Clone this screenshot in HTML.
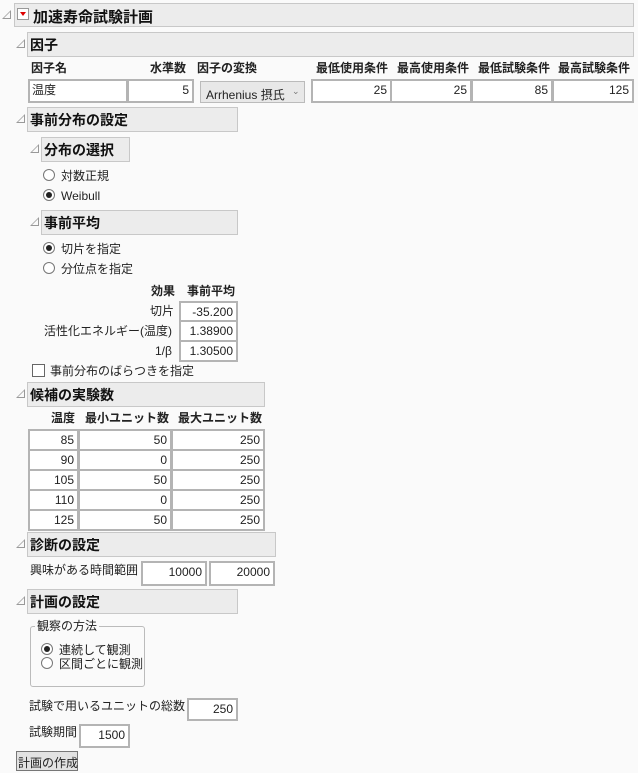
<!DOCTYPE html><html><head><meta charset="utf-8"><style>
body{margin:0;width:638px;height:773px;background:#fafafa;font-family:"Liberation Sans","Noto Sans CJK JP",sans-serif;font-size:12px;color:#222;position:relative;overflow:hidden}
div,span{position:absolute;box-sizing:border-box}
.h{background:#ececec;border:1px solid #c8c8c8;font-weight:bold;font-size:14px;padding:2px 0 0 2px;color:#111}
.t{width:0;height:0;border-left:9px solid transparent;border-bottom:9px solid #999}
.t::after{content:"";position:absolute;left:-7px;top:2px;border-left:6px solid transparent;border-bottom:6px solid #fafafa}
.b{background:#fff;border:2px solid #b4b4b4;text-align:right;padding:1px 3px 0 0;line-height:16px}
.l{white-space:nowrap;line-height:14px}
.bl{font-weight:bold}
.r{width:12px;height:12px;border:1px solid #777;border-radius:50%;background:#fff}
.r.on::after{content:"";position:absolute;left:2px;top:2px;width:6px;height:6px;border-radius:50%;background:#222}
</style></head><body>
<div class="t" style="left:2px;top:10px"></div>
<div class="h" style="left:14px;top:3px;width:620px;height:24px;font-size:15px;padding-left:18px">加速寿命試験計画</div>
<div style="left:17px;top:8px;width:12px;height:12px;border:1px solid #999;background:#fff"><span style="left:2px;top:3px;border-left:3px solid transparent;border-right:3px solid transparent;border-top:4px solid #d00"></span></div>
<div class="t" style="left:16px;top:39px"></div>
<div class="h" style="left:27px;top:32px;width:607px;height:25px">因子</div>
<div class="l bl" style="left:31px;top:61px">因子名</div>
<div class="l bl" style="left:150px;top:61px">水準数</div>
<div class="l bl" style="left:197px;top:61px">因子の変換</div>
<div class="l bl" style="left:316px;top:61px">最低使用条件</div>
<div class="l bl" style="left:397px;top:61px">最高使用条件</div>
<div class="l bl" style="left:478px;top:61px">最低試験条件</div>
<div class="l bl" style="left:558px;top:61px">最高試験条件</div>
<div class="b" style="left:28px;top:79px;width:100px;height:24px;text-align:left;padding-left:2px">温度</div>
<div class="b" style="left:127px;top:79px;width:67px;height:24px">5</div>
<div style="left:200px;top:81px;width:105px;height:22px;border:1px solid #bbb;background:#e8e8e8;padding:4px 0 0 5px;white-space:nowrap">Arrhenius 摂氏 <span style="left:91px;top:4px;font-size:9px;color:#777">⌄</span></div>
<div class="b" style="left:311px;top:79px;width:81px;height:24px">25</div>
<div class="b" style="left:390px;top:79px;width:82px;height:24px">25</div>
<div class="b" style="left:471px;top:79px;width:82px;height:24px">85</div>
<div class="b" style="left:552px;top:79px;width:82px;height:24px">125</div>
<div class="t" style="left:16px;top:114px"></div>
<div class="h" style="left:27px;top:107px;width:211px;height:25px">事前分布の設定</div>
<div class="t" style="left:30px;top:144px"></div>
<div class="h" style="left:41px;top:137px;width:89px;height:25px">分布の選択</div>
<div class="r" style="left:43px;top:169px"></div><div class="l" style="left:61px;top:169px">対数正規</div>
<div class="r on" style="left:43px;top:189px"></div><div class="l" style="left:61px;top:189px">Weibull</div>
<div class="t" style="left:30px;top:217px"></div>
<div class="h" style="left:41px;top:210px;width:197px;height:25px">事前平均</div>
<div class="r on" style="left:43px;top:242px"></div><div class="l" style="left:61px;top:242px">切片を指定</div>
<div class="r" style="left:43px;top:262px"></div><div class="l" style="left:61px;top:262px">分位点を指定</div>
<div class="l bl" style="left:151px;top:284px">効果</div>
<div class="l bl" style="left:187px;top:284px">事前平均</div>
<div class="l" style="left:150px;top:304px">切片</div>
<div class="l" style="left:44px;top:324px">活性化エネルギー(温度)</div>
<div class="l" style="left:155px;top:344px">1/β</div>
<div class="b" style="left:179px;top:301px;width:59px;height:21px">-35.200</div>
<div class="b" style="left:179px;top:320px;width:59px;height:22px">1.38900</div>
<div class="b" style="left:179px;top:340px;width:59px;height:22px">1.30500</div>
<div style="left:32px;top:364px;width:13px;height:13px;border:1px solid #666;background:#fff"></div>
<div class="l" style="left:50px;top:364px">事前分布のばらつきを指定</div>
<div class="t" style="left:16px;top:389px"></div>
<div class="h" style="left:27px;top:382px;width:238px;height:25px">候補の実験数</div>
<div class="l bl" style="left:51px;top:411px">温度</div>
<div class="l bl" style="left:85px;top:411px">最小ユニット数</div>
<div class="l bl" style="left:178px;top:411px">最大ユニット数</div>
<div class="b" style="left:28px;top:429px;width:51px;height:22px">85</div><div class="b" style="left:78px;top:429px;width:94px;height:22px">50</div><div class="b" style="left:171px;top:429px;width:94px;height:22px">250</div>
<div class="b" style="left:28px;top:449px;width:51px;height:22px">90</div><div class="b" style="left:78px;top:449px;width:94px;height:22px">0</div><div class="b" style="left:171px;top:449px;width:94px;height:22px">250</div>
<div class="b" style="left:28px;top:469px;width:51px;height:22px">105</div><div class="b" style="left:78px;top:469px;width:94px;height:22px">50</div><div class="b" style="left:171px;top:469px;width:94px;height:22px">250</div>
<div class="b" style="left:28px;top:489px;width:51px;height:22px">110</div><div class="b" style="left:78px;top:489px;width:94px;height:22px">0</div><div class="b" style="left:171px;top:489px;width:94px;height:22px">250</div>
<div class="b" style="left:28px;top:509px;width:51px;height:22px">125</div><div class="b" style="left:78px;top:509px;width:94px;height:22px">50</div><div class="b" style="left:171px;top:509px;width:94px;height:22px">250</div>
<div class="t" style="left:16px;top:539px"></div>
<div class="h" style="left:27px;top:532px;width:249px;height:25px">診断の設定</div>
<div class="l" style="left:30px;top:563px">興味がある時間範囲</div>
<div class="b" style="left:141px;top:561px;width:66px;height:25px">10000</div>
<div class="b" style="left:209px;top:561px;width:66px;height:25px">20000</div>
<div class="t" style="left:16px;top:596px"></div>
<div class="h" style="left:27px;top:589px;width:211px;height:25px">計画の設定</div>
<div style="left:30px;top:626px;width:115px;height:61px;border:1px solid #bbb;border-radius:3px"></div>
<div class="l" style="left:35px;top:619px;background:#fafafa;padding:0 2px">観察の方法</div>
<div class="r on" style="left:41px;top:643px"></div><div class="l" style="left:59px;top:643px">連続して観測</div>
<div class="r" style="left:41px;top:657px"></div><div class="l" style="left:59px;top:657px">区間ごとに観測</div>
<div class="l" style="left:29px;top:699px">試験で用いるユニットの総数</div>
<div class="b" style="left:187px;top:698px;width:51px;height:23px">250</div>
<div class="l" style="left:29px;top:725px">試験期間</div>
<div class="b" style="left:79px;top:724px;width:51px;height:24px">1500</div>
<div style="left:16px;top:751px;width:62px;height:20px;border:1px solid #777;background:#e2e2e2;padding:2px 0 0 1px;white-space:nowrap">計画の作成</div>
</body></html>
